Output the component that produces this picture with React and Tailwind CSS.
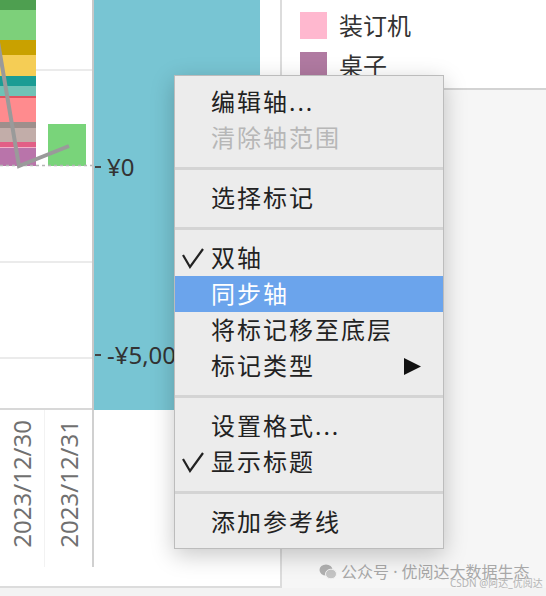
import React from "react";

const font = { fontFamily: '"Noto Sans", "Noto Sans CJK SC", sans-serif' };

function Check() {
  return (
    <svg width="24" height="22" viewBox="0 0 24 22" className="absolute left-[6px]">
      <polyline points="2,8 9,20 22,2" fill="none" stroke="#222" strokeWidth="2.2" strokeLinejoin="miter" />
    </svg>
  );
}

function Item({ children, checked, disabled, active, arrow }) {
  return (
    <div
      className={`relative flex h-9 items-center pl-[36px] pr-[22px] text-[24px] tracking-[2px] ${
        active ? "bg-[#6ba4ec] text-white" : disabled ? "text-[#b7b7b7]" : "text-[#222]"
      }`}
    >
      {checked && <Check />}
      <span className="flex-1 leading-none">{children}</span>
      {arrow && (
        <svg width="17" height="17" viewBox="0 0 17 17">
          <polygon points="0,0 17,8.5 0,17" fill="#111" />
        </svg>
      )}
    </div>
  );
}

function Sep() {
  return (
    <div className="flex h-6 items-center">
      <div className="h-[3px] w-full bg-[#d4d4d4]" />
    </div>
  );
}

function Plot() {
  const stack = [
    [0, 10, "#4e9f50"],
    [10, 40, "#7dd07a"],
    [40, 55, "#c9a100"],
    [55, 76, "#f5cd55"],
    [76, 86, "#1b9c94"],
    [86, 96, "#6fc2b6"],
    [96, 98, "#e0525f"],
    [98, 122, "#ff8b8e"],
    [122, 128, "#9e8f8c"],
    [128, 142, "#c2ada9"],
    [142, 147, "#e25f86"],
    [147, 148, "#f3b0c8"],
    [148, 166, "#b974aa"],
  ];
  return (
    <svg width="92" height="408" viewBox="0 0 92 408">
      <line x1="0" y1="70" x2="92" y2="70" stroke="#ebebeb" strokeWidth="2" />
      <line x1="0" y1="262" x2="92" y2="262" stroke="#ebebeb" strokeWidth="2" />
      <line x1="0" y1="358" x2="92" y2="358" stroke="#ebebeb" strokeWidth="2" />
      {stack.map(([a, b, c]) => (
        <rect key={a} x="0" y={a} width="36" height={b - a} fill={c} />
      ))}
      <rect x="48" y="124" width="38" height="42" fill="#79d47a" />
      <line x1="0" y1="165.5" x2="92" y2="165.5" stroke="#b5b5b5" strokeWidth="1.5" strokeDasharray="3 3" />
      <polyline points="-4,30 19,166 69,146" fill="none" stroke="#9a9a9a" strokeWidth="4" />
    </svg>
  );
}

export default function App() {
  return (
    <div className="relative h-[596px] w-[546px] overflow-hidden bg-[#f3f3f3]" style={font}>
      <div className="flex h-[588px]">
        {/* left chart panel */}
        <div className="flex w-[282px] flex-col border-b-2 border-r-2 border-[#dcdcdc] bg-white">
          <div className="flex h-[410px]">
            <div className="w-[92px] border-b-2 border-[#d8d8d8]">
              <Plot />
            </div>
            <div className="w-[2px] bg-[#c8c8c8]" />
            <div className="flex w-[166px] flex-col bg-[#78c5d3] pl-[1px] pt-[152px] text-[24px] text-[#333]">
              <div className="flex h-[30px] items-center whitespace-nowrap">
                <span className="mr-[6px] h-[2px] w-[6px] bg-[#444]" />
                ¥0
              </div>
              <div className="mt-[158px] flex h-[30px] items-center whitespace-nowrap">
                <span className="mr-[6px] h-[2px] w-[6px] bg-[#444]" />
                -¥5,000
              </div>
            </div>
            <div className="flex-1" />
          </div>
          <div className="flex h-[157px]">
            <div className="flex w-[44px] items-end justify-center pb-[19px] text-[24px] text-[#707070]">
              <span className="rotate-180 leading-none [writing-mode:vertical-rl]">2023/12/30</span>
            </div>
            <div className="w-px bg-[#f2f2f2]" />
            <div className="flex w-[47px] items-end justify-center pb-[19px] text-[24px] text-[#707070]">
              <span className="rotate-180 leading-none [writing-mode:vertical-rl]">2023/12/31</span>
            </div>
            <div className="w-[2px] bg-[#d0d0d0]" />
            <div className="flex-1" />
          </div>
        </div>

        {/* right legend panel */}
        <div className="flex flex-1 flex-col">
          <div className="flex h-[90px] flex-col gap-[13px] border-b-2 border-[#d3d3d3] bg-white pl-[18px] pt-[12px]">
            <div className="flex items-center gap-[12px] text-[24px] text-[#333]">
              <div className="h-[27px] w-[27px] bg-[#ffb8cf]" />
              <span className="leading-none">装订机</span>
            </div>
            <div className="flex items-center gap-[12px] text-[24px] text-[#333]">
              <div className="h-[27px] w-[27px] bg-[#b07aa1]" />
              <span className="leading-none">桌子</span>
            </div>
          </div>
          <div className="flex-1 bg-[#f6f6f6]" />
        </div>
      </div>

      {/* watermark */}
      <div className="absolute left-[319px] top-[561px] flex items-center gap-[4px] text-[16px] leading-[22px] text-[#a8a8a8]">
        <svg width="18" height="16" viewBox="0 0 18 16">
          <ellipse cx="7" cy="6" rx="6.5" ry="5.5" fill="#b0b0b0" />
          <ellipse cx="12" cy="10" rx="5.5" ry="4.8" fill="#c4c4c4" stroke="#f3f3f3" strokeWidth="1" />
        </svg>
        <span>公众号 · 优阅达大数据生态</span>
      </div>
      <div className="absolute left-[450px] top-[577px] whitespace-nowrap text-[10px] leading-[13px] text-[#b4b4b4]">CSDN @阿达_优阅达</div>

      {/* context menu */}
      <div className="absolute left-[174px] top-[75px] w-[270px] border border-[#bcbcbc] bg-[#ececec] py-[8px] shadow-[0_6px_22px_rgba(0,0,0,0.22)]">
        <Item>编辑轴...</Item>
        <Item disabled>清除轴范围</Item>
        <Sep />
        <Item>选择标记</Item>
        <Sep />
        <Item checked>双轴</Item>
        <Item active>同步轴</Item>
        <Item>将标记移至底层</Item>
        <Item arrow>标记类型</Item>
        <Sep />
        <Item>设置格式...</Item>
        <Item checked>显示标题</Item>
        <Sep />
        <Item>添加参考线</Item>
      </div>
    </div>
  );
}
